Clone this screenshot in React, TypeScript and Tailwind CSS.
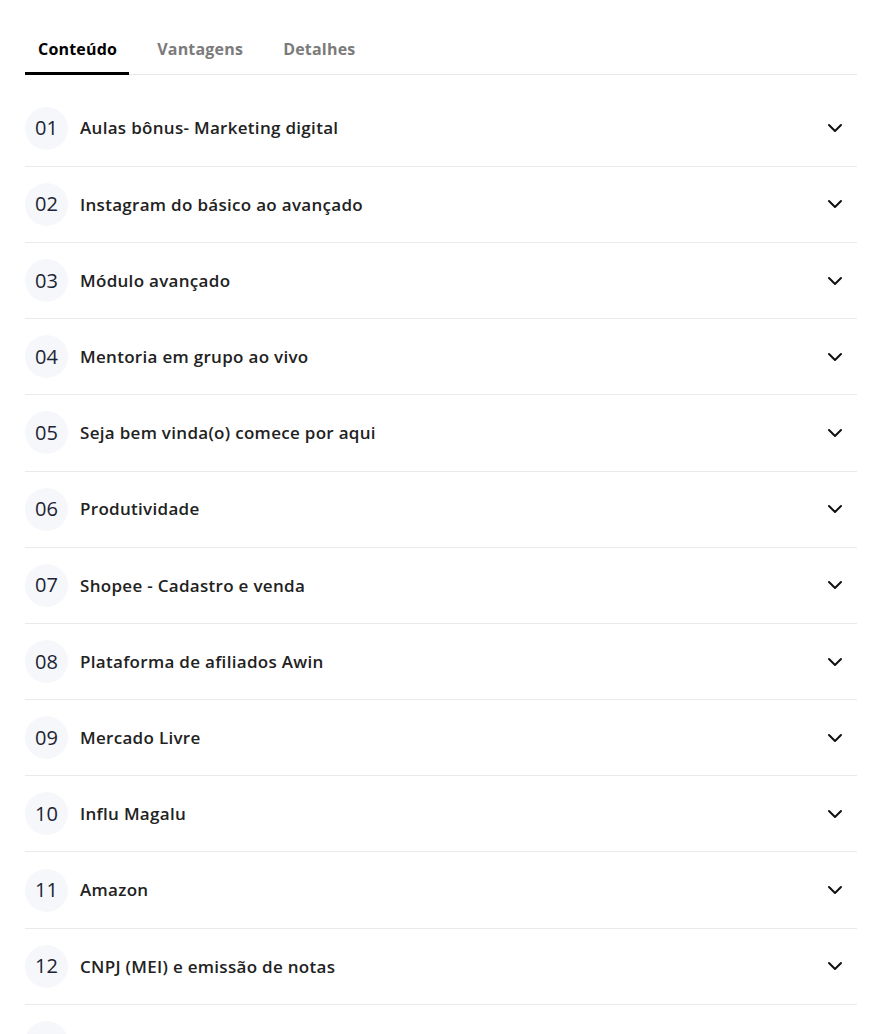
import React, { useState } from 'react'
import { ChevronDown } from 'lucide-react'

const tabs = ['Conteúdo', 'Vantagens', 'Detalhes']

const modules = [
  'Aulas bônus- Marketing digital',
  'Instagram do básico ao avançado',
  'Módulo avançado',
  'Mentoria em grupo ao vivo',
  'Seja bem vinda(o) comece por aqui',
  'Produtividade',
  'Shopee - Cadastro e venda',
  'Plataforma de afiliados Awin',
  'Mercado Livre',
  'Influ Magalu',
  'Amazon',
  'CNPJ (MEI) e emissão de notas',
  '',
]

const App = () => {
  const [active, setActive] = useState(0)

  return (
    <div className="min-h-screen bg-white pt-[24.6px] pl-[25px] pr-[22px]" style={{ fontFamily: '"Open Sans", "Noto Sans", sans-serif' }}>
      {/* abas */}
      <div className="flex gap-[15px] border-b border-[#e7e7ee]">
        {tabs.map((t, i) => (
          <button
            key={t}
            onClick={() => setActive(i)}
            className={
              i === active
                ? 'pl-[13px] pr-3 pt-3 pb-[11px] border-b-[3px] border-black text-[16px] leading-6 font-bold tracking-[0.2px] text-black -mb-px'
                : 'pl-[13px] pr-3 pt-3 pb-[11px] border-b-[3px] border-transparent text-[16px] leading-6 font-bold tracking-[0.2px] text-[#7b7b7b] -mb-px'
            }
          >
            {t}
          </button>
        ))}
      </div>

      {/* lista de modulos */}
      <div className="mt-4">
        {modules.map((m, i) => (
          <div key={i} className="h-[76.2px] flex items-center border-b border-[#e9e9ee]">
            <div className="w-[43px] h-[43px] rounded-full bg-[#f5f7fa] flex items-center justify-center shrink-0 text-[20px] text-[#1c2433]">
              {String(i + 1).padStart(2, '0')}
            </div>
            <p className="ml-3 flex-1 text-[17px] font-semibold tracking-[0.3px] text-[#222]">{m}</p>
            <ChevronDown size={24} strokeWidth={2} className="text-[#111] mr-[10px]" />
          </div>
        ))}
      </div>
    </div>
  )
}

export default App
